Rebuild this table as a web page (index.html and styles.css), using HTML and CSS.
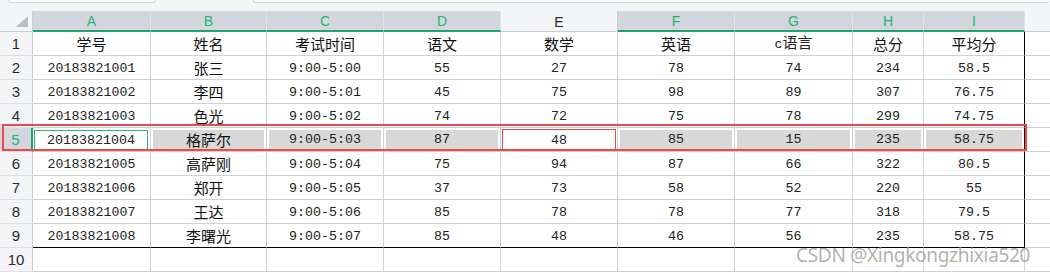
FILE: index.html
```html
<!DOCTYPE html>
<html lang="zh-CN">
<head>
<meta charset="utf-8">
<title>成绩表</title>
<link rel="stylesheet" href="styles.css">
</head>
<body>
<div class="screen">
  <div class="topbar">
    <div class="box box-name"></div>
    <div class="box box-formula"></div>
  </div>
  <div class="sheet">
    <div class="corner"><span class="tri"></span></div>
    <div class="colh sel">A</div>
    <div class="colh sel">B</div>
    <div class="colh sel">C</div>
    <div class="colh sel">D</div>
    <div class="colh">E</div>
    <div class="colh sel">F</div>
    <div class="colh sel">G</div>
    <div class="colh sel">H</div>
    <div class="colh sel">I</div>
    <div class="colh rest"></div>

    <div class="rowh">1</div>
    <div class="c zh">学号</div><div class="c zh">姓名</div><div class="c zh">考试时间</div><div class="c zh">语文</div><div class="c zh">数学</div><div class="c zh">英语</div><div class="c mixc"><span class="mix">c<span class="zhi">语言</span></span></div><div class="c zh">总分</div><div class="c zh last">平均分</div><div class="c rest"></div>

    <div class="rowh">2</div>
    <div class="c">20183821001</div><div class="c zh">张三</div><div class="c">9:00-5:00</div><div class="c">55</div><div class="c">27</div><div class="c">78</div><div class="c">74</div><div class="c">234</div><div class="c last">58.5</div><div class="c rest"></div>

    <div class="rowh">3</div>
    <div class="c">20183821002</div><div class="c zh">李四</div><div class="c">9:00-5:01</div><div class="c">45</div><div class="c">75</div><div class="c">98</div><div class="c">89</div><div class="c">307</div><div class="c last">76.75</div><div class="c rest"></div>

    <div class="rowh">4</div>
    <div class="c">20183821003</div><div class="c zh">色光</div><div class="c">9:00-5:02</div><div class="c">74</div><div class="c">72</div><div class="c">75</div><div class="c">78</div><div class="c">299</div><div class="c last">74.75</div><div class="c rest"></div>

    <div class="rowh active">5</div>
    <div class="c active-cell"><span class="frame green">20183821004</span></div><div class="c hl zh">格萨尔</div><div class="c hl">9:00-5:03</div><div class="c hl">87</div><div class="c marked"><span class="frame red">48</span></div><div class="c hl">85</div><div class="c hl">15</div><div class="c hl">235</div><div class="c hl last">58.75</div><div class="c rest"></div>

    <div class="rowh">6</div>
    <div class="c">20183821005</div><div class="c zh">高萨刚</div><div class="c">9:00-5:04</div><div class="c">75</div><div class="c">94</div><div class="c">87</div><div class="c">66</div><div class="c">322</div><div class="c last">80.5</div><div class="c rest"></div>

    <div class="rowh">7</div>
    <div class="c">20183821006</div><div class="c zh">郑开</div><div class="c">9:00-5:05</div><div class="c">37</div><div class="c">73</div><div class="c">58</div><div class="c">52</div><div class="c">220</div><div class="c last">55</div><div class="c rest"></div>

    <div class="rowh">8</div>
    <div class="c">20183821007</div><div class="c zh">王达</div><div class="c">9:00-5:06</div><div class="c">85</div><div class="c">78</div><div class="c">78</div><div class="c">77</div><div class="c">318</div><div class="c last">79.5</div><div class="c rest"></div>

    <div class="rowh">9</div>
    <div class="c bot">20183821008</div><div class="c bot zh">李曙光</div><div class="c bot">9:00-5:07</div><div class="c bot">85</div><div class="c bot">48</div><div class="c bot">46</div><div class="c bot">56</div><div class="c bot">235</div><div class="c bot last">58.75</div><div class="c rest"></div>

    <div class="rowh">10</div>
    <div class="c"></div><div class="c"></div><div class="c"></div><div class="c"></div><div class="c"></div><div class="c"></div><div class="c"></div><div class="c"></div><div class="c"></div><div class="c rest"></div>
  </div>
  <div class="annot"></div>
  <div class="watermark">CSDN @Xingkongzhixia520</div>
</div>
</body>
</html>
```
FILE: styles.css
```css
html, body {
  margin: 0;
  padding: 0;
  background: #ffffff;
}

.screen {
  position: relative;
  width: 1050px;
  height: 276px;
  overflow: hidden;
  background: #ffffff;
}

.topbar {
  height: 11px;
  background: #f4f5f7;
  display: flex;
  align-items: flex-start;
}

.box {
  height: 2px;
  background: #ffffff;
  border: 1px solid #d5d8de;
  border-top: none;
  border-radius: 0 0 3px 3px;
}

.box-name {
  margin-left: 8px;
  width: 146px;
}

.box-formula {
  margin-left: 97px;
  flex: 1;
  border-right: none;
}

.sheet {
  display: grid;
  grid-template-columns: 33px 118px 116px 117px 117px 117px 117px 118px 71px 101px 1fr;
  grid-template-rows: 21px repeat(10, 24px);
}

.sheet > div {
  box-sizing: border-box;
}

.corner {
  position: relative;
  background: #f4f5f7;
  border-right: 1px solid #c9cdd8;
  border-bottom: 1px solid #c9cdd8;
}

.tri {
  position: absolute;
  right: 4px;
  bottom: 4px;
  width: 0;
  height: 0;
  border-left: 12px solid transparent;
  border-bottom: 11px solid #b9bdc6;
}

.colh {
  background: #f4f5f7;
  border-right: 1px solid #c9cdd8;
  border-bottom: 1px solid #c9cdd8;
  font-family: "Liberation Sans", "Noto Sans", sans-serif;
  font-size: 14px;
  color: #2b2b2b;
  display: flex;
  align-items: center;
  justify-content: center;
  padding-top: 1px;
}

.colh.sel {
  background: #d3d6dd;
  color: #22b573;
  border-right: 1px solid #e1e3e8;
  border-bottom: 2px solid #21a46f;
}

.colh.rest {
  border-right: none;
  background: #f4f5f7;
}

.rowh {
  background: #f4f5f7;
  border-right: 1px solid #c9cdd8;
  border-bottom: 1px solid #dde0e6;
  font-family: "Liberation Sans", "Noto Sans", sans-serif;
  font-size: 15px;
  color: #2b2b2b;
  display: flex;
  align-items: center;
  justify-content: center;
}

.rowh.active {
  background: #d3d6dd;
  color: #22b573;
  border-right: 2px solid #21a46f;
}

.c {
  border-right: 1px solid #cdd1dd;
  border-bottom: 1px solid #cdd1dd;
  font-family: "Liberation Mono", "Noto Sans CJK SC", monospace;
  font-size: 13.3px;
  line-height: 16px;
  color: #222222;
  display: flex;
  align-items: center;
  justify-content: center;
  white-space: nowrap;
  padding-top: 2px;
}

.c.zh {
  font-family: "Noto Sans CJK SC", "Liberation Sans", sans-serif;
  font-size: 15px;
  line-height: 15px;
  padding-top: 0;
  padding-bottom: 1px;
  color: #111111;
}

.c.mixc {
  padding-top: 0;
}

.mix {
  line-height: 15px;
  padding-bottom: 1px;
}

.zhi {
  font-family: "Noto Sans CJK SC", "Liberation Sans", sans-serif;
  font-size: 15px;
}

.c.last {
  border-right: 1px solid #000000;
}

.c.bot {
  border-bottom: 1px solid #000000;
}

.c.rest {
  border-right: none;
}

.c.hl {
  padding: 2px;
  background: #d8d8d8;
  background-clip: content-box;
}

.c.active-cell,
.c.marked {
  padding: 1px;
  align-items: stretch;
  justify-content: stretch;
}

.c.active-cell {
  padding: 2px 2px 1px 1px;
}

.frame {
  flex: 1;
  display: flex;
  align-items: center;
  justify-content: center;
  background: #ffffff;
  padding-top: 2px;
}

.frame.green {
  border: 1px solid #27b77c;
}

.frame.red {
  border: 1px solid #ec4848;
}

.annot {
  position: absolute;
  left: 2px;
  top: 124px;
  width: 1021px;
  height: 23px;
  border: 2px solid #f04848;
  pointer-events: none;
}

.watermark {
  position: absolute;
  left: 796px;
  top: 243px;
  font-family: "Noto Sans", "Liberation Sans", sans-serif;
  font-size: 19px;
  line-height: 24px;
  color: rgba(150, 150, 150, 0.75);
  white-space: nowrap;
  letter-spacing: -0.3px;
}
```
